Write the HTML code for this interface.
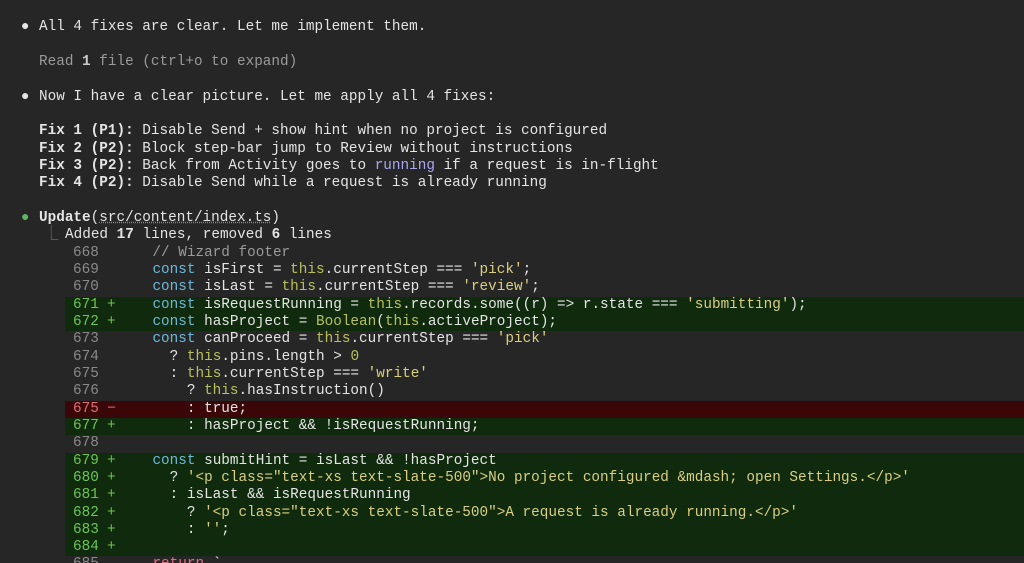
<!DOCTYPE html>
<html><head><meta charset="utf-8"><style>
html,body{margin:0;background:#262626;width:1024px;height:563px;overflow:hidden}
body{position:relative;font-family:"Liberation Mono",monospace;font-size:14.35px;color:#e4e4e4}
.l{position:absolute;left:0;width:1024px;height:17.33px;line-height:17.33px;white-space:pre;margin-top:2px}
.t{position:absolute;left:39px}
.b{position:absolute;left:21px;font-size:14px}
.g{color:#9a9a9a}
.n{position:absolute;left:73px;color:#8a8a8a}
.s{position:absolute;left:107px}
.c{position:absolute;left:118px}
.add{background:#0f2a0c}.add .n,.add .s{color:#6cc651}
.del{background:#3b0607}.del .n,.del .s{color:#e06c75}
.row{left:65px;width:959px}
.row .n{left:8px}.row .s{left:42px}.row .c{left:53px}
.k{color:#6cb8d8}.y{color:#b8c15a}.st{color:#d9cf7e}.p{color:#a9a6f0}.r{color:#e06c80}
b{font-weight:bold}
</style></head><body>
<div class="l" style="top:17px"><span class="b">●</span><span class="t">All 4 fixes are clear. Let me implement them.</span></div>
<div class="l" style="top:52px"><span class="t g">Read <b style="color:#ccc">1</b> file (ctrl+o to expand)</span></div>
<div class="l" style="top:87px"><span class="b">●</span><span class="t">Now I have a clear picture. Let me apply all 4 fixes:</span></div>
<div class="l" style="top:121px"><span class="t"><b>Fix 1 (P1):</b> Disable Send + show hint when no project is configured</span></div>
<div class="l" style="top:139px"><span class="t"><b>Fix 2 (P2):</b> Block step-bar jump to Review without instructions</span></div>
<div class="l" style="top:156px"><span class="t"><b>Fix 3 (P2):</b> Back from Activity goes to <span class="p">running</span> if a request is in-flight</span></div>
<div class="l" style="top:173px"><span class="t"><b>Fix 4 (P2):</b> Disable Send while a request is already running</span></div>
<div class="l" style="top:208px"><span class="b" style="color:#5fb85f">●</span><span class="t"><b>Update</b>(<span style="text-decoration:underline dotted #888">src/content/index.ts</span>)</span></div>
<div class="l" style="top:225px"><span style="position:absolute;left:44px;color:#777">⎿</span><span style="position:absolute;left:65px">Added <b>17</b> lines, removed <b>6</b> lines</span></div>

<div class="l row" style="top:243px"><span class="n">668</span><span class="c g">    // Wizard footer</span></div>
<div class="l row" style="top:260px"><span class="n">669</span><span class="c">    <span class="k">const</span> isFirst = <span class="y">this</span>.currentStep === <span class="st">'pick'</span>;</span></div>
<div class="l row" style="top:277px"><span class="n">670</span><span class="c">    <span class="k">const</span> isLast = <span class="y">this</span>.currentStep === <span class="st">'review'</span>;</span></div>
<div class="l row add" style="top:295px"><span class="n">671</span><span class="s">+</span><span class="c">    <span class="k">const</span> isRequestRunning = <span class="y">this</span>.records.some((r) =&gt; r.state === <span class="st">'submitting'</span>);</span></div>
<div class="l row add" style="top:312px"><span class="n">672</span><span class="s">+</span><span class="c">    <span class="k">const</span> hasProject = <span class="y">Boolean</span>(<span class="y">this</span>.activeProject);</span></div>
<div class="l row" style="top:329px"><span class="n">673</span><span class="c">    <span class="k">const</span> canProceed = <span class="y">this</span>.currentStep === <span class="st">'pick'</span></span></div>
<div class="l row" style="top:347px"><span class="n">674</span><span class="c">      ? <span class="y">this</span>.pins.length &gt; <span class="y">0</span></span></div>
<div class="l row" style="top:364px"><span class="n">675</span><span class="c">      : <span class="y">this</span>.currentStep === <span class="st">'write'</span></span></div>
<div class="l row" style="top:381px"><span class="n">676</span><span class="c">        ? <span class="y">this</span>.hasInstruction()</span></div>
<div class="l row del" style="top:399px"><span class="n">675</span><span class="s">−</span><span class="c">        : true;</span></div>
<div class="l row add" style="top:416px"><span class="n">677</span><span class="s">+</span><span class="c">        : hasProject &amp;&amp; !isRequestRunning;</span></div>
<div class="l row" style="top:433px"><span class="n">678</span></div>
<div class="l row add" style="top:451px;height:103px"></div>
<div class="l row add" style="top:451px"><span class="n">679</span><span class="s">+</span><span class="c">    <span class="k">const</span> submitHint = isLast &amp;&amp; !hasProject</span></div>
<div class="l row add" style="top:468px"><span class="n">680</span><span class="s">+</span><span class="c">      ? <span class="st">'&lt;p class="text-xs text-slate-500"&gt;No project configured &amp;mdash; open Settings.&lt;/p&gt;'</span></span></div>
<div class="l row add" style="top:485px"><span class="n">681</span><span class="s">+</span><span class="c">      : isLast &amp;&amp; isRequestRunning</span></div>
<div class="l row add" style="top:503px"><span class="n">682</span><span class="s">+</span><span class="c">        ? <span class="st">'&lt;p class="text-xs text-slate-500"&gt;A request is already running.&lt;/p&gt;'</span></span></div>
<div class="l row add" style="top:520px"><span class="n">683</span><span class="s">+</span><span class="c">        : <span class="st">''</span>;</span></div>
<div class="l row add" style="top:537px"><span class="n">684</span><span class="s">+</span></div>
<div class="l row" style="top:554px"><span class="n">685</span><span class="c">    <span class="r">return</span> `</span></div>
</body></html>
